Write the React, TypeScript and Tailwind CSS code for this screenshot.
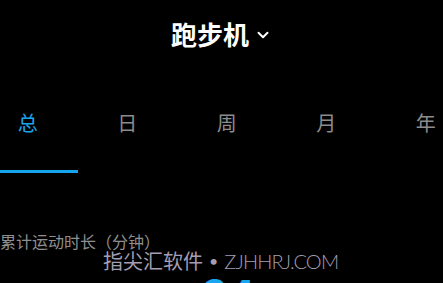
import { ChevronDown } from "lucide-react"

const tabs = ["总", "日", "周", "月", "年"]

export default function App() {
  return (
    <div
      className="relative h-[283px] w-[443px] overflow-hidden bg-black"
      style={{ fontFamily: '"Noto Sans CJK SC", "Noto Sans", sans-serif' }}
    >
      {/* header */}
      <div className="flex h-[70px] items-center justify-center pb-[2px]">
        <span className="text-[26px] font-bold leading-none text-white">跑步机</span>
        <ChevronDown className="ml-[5px] mt-[2px] h-[18px] w-[18px] text-white" strokeWidth={2.6} />
      </div>

      {/* tabs */}
      <div className="mt-[33px] overflow-hidden">
        <div className="-ml-[22px] flex">
          {tabs.map((t, i) => (
            <div key={t} className="flex w-[99.5px] shrink-0 flex-col items-center">
              <span
                className={
                  "text-[20px] leading-[40px] " + (i === 0 ? "text-[#1aa6ee]" : "text-[#8c8c8c]")
                }
              >
                {t}
              </span>
              <div className={"mt-[27px] h-[3px] w-full " + (i === 0 ? "bg-[#16a4ec]" : "bg-transparent")} />
            </div>
          ))}
        </div>
      </div>

      {/* stats */}
      <div className="mt-[57px] text-[16px] leading-[22px] text-[#8f8f8f]">累计运动时长（分钟）</div>
      <div className="mt-[19px] pl-[203px] text-[44px] font-bold leading-none text-[#1aa6ee]">24</div>

      {/* watermark */}
      <div
        className="absolute left-[103px] top-[248px] flex items-center text-[20px] leading-[26px] text-[#a49eb4]"
        style={{ fontFamily: 'Lato, "Noto Sans CJK SC", sans-serif' }}
      >
        <span>指尖汇软件</span>
        <span className="mx-[6px] text-[16px]">•</span>
        <span className="font-light tracking-[-0.8px]">ZJHHRJ.COM</span>
      </div>
    </div>
  )
}
